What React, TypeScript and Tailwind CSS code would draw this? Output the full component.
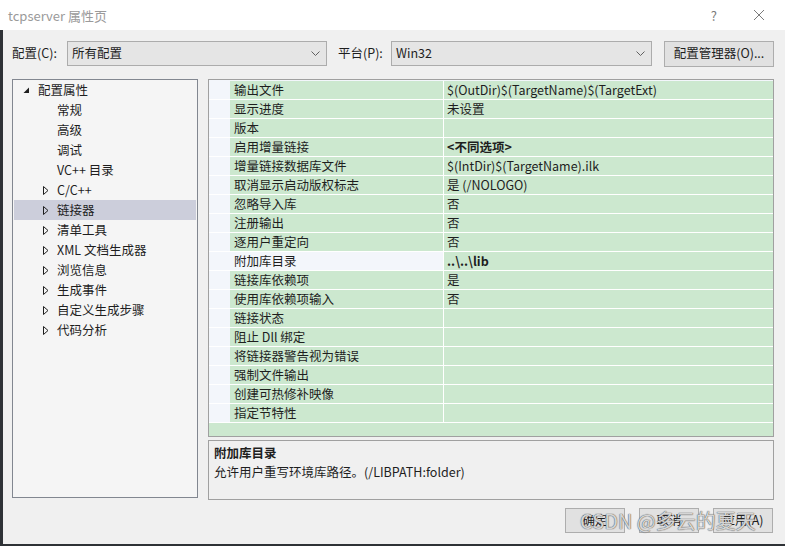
import React from 'react';

const FONT = '"Microsoft YaHei UI", "Noto Sans CJK SC", "Noto Sans", sans-serif';

const treeItems: { label: string; level: 0 | 1; expander?: 'open' | 'closed'; selected?: boolean }[] = [
  { label: '配置属性', level: 0, expander: 'open' },
  { label: '常规', level: 1 },
  { label: '高级', level: 1 },
  { label: '调试', level: 1 },
  { label: 'VC++ 目录', level: 1 },
  { label: 'C/C++', level: 1, expander: 'closed' },
  { label: '链接器', level: 1, expander: 'closed', selected: true },
  { label: '清单工具', level: 1, expander: 'closed' },
  { label: 'XML 文档生成器', level: 1, expander: 'closed' },
  { label: '浏览信息', level: 1, expander: 'closed' },
  { label: '生成事件', level: 1, expander: 'closed' },
  { label: '自定义生成步骤', level: 1, expander: 'closed' },
  { label: '代码分析', level: 1, expander: 'closed' },
];

const props: { name: string; value: string; bold?: boolean; selected?: boolean }[] = [
  { name: '输出文件', value: '$(OutDir)$(TargetName)$(TargetExt)' },
  { name: '显示进度', value: '未设置' },
  { name: '版本', value: '' },
  { name: '启用增量链接', value: '<不同选项>', bold: true },
  { name: '增量链接数据库文件', value: '$(IntDir)$(TargetName).ilk' },
  { name: '取消显示启动版权标志', value: '是 (/NOLOGO)' },
  { name: '忽略导入库', value: '否' },
  { name: '注册输出', value: '否' },
  { name: '逐用户重定向', value: '否' },
  { name: '附加库目录', value: '..\\..\\lib', bold: true, selected: true },
  { name: '链接库依赖项', value: '是' },
  { name: '使用库依赖项输入', value: '否' },
  { name: '链接状态', value: '' },
  { name: '阻止 Dll 绑定', value: '' },
  { name: '将链接器警告视为错误', value: '' },
  { name: '强制文件输出', value: '' },
  { name: '创建可热修补映像', value: '' },
  { name: '指定节特性', value: '' },
];

function Chevron() {
  return (
    <svg width="9" height="5" viewBox="0 0 9 5" className="text-[#606060]">
      <path d="M0.5 0.5 L4.5 4.5 L8.5 0.5" fill="none" stroke="currentColor" strokeWidth="1" />
    </svg>
  );
}

function Dropdown({ text, width }: { text: string; width: string }) {
  return (
    <div className={`${width} h-[25px] flex items-center justify-between border border-[#acacac] bg-[#e5e5e5] pl-[4px] pr-[6px]`}>
      <span>{text}</span>
      <Chevron />
    </div>
  );
}

function Expander({ kind }: { kind: 'open' | 'closed' }) {
  if (kind === 'open') {
    return (
      <svg width="7" height="7" viewBox="0 0 7 7">
        <path d="M6 0.5 L6 6 L0.5 6 Z" fill="#1e1e1e" />
      </svg>
    );
  }
  return (
    <svg width="6" height="9" viewBox="0 0 6 9">
      <path d="M0.5 0.5 L5 4.5 L0.5 8.5 Z" fill="none" stroke="#1e1e1e" strokeWidth="1" />
    </svg>
  );
}

function Button({ label }: { label: string }) {
  return (
    <div className="w-[60px] h-[25px] flex items-center justify-center border border-[#adadad] bg-[#e1e1e1]">
      {label}
    </div>
  );
}

export default function App() {
  return (
    <div
      className="relative w-[785px] h-[546px] overflow-hidden flex flex-col bg-[#f0f0f0] text-[12.5px] text-[#1e1e1e] leading-none"
      style={{ fontFamily: FONT }}
    >
      {/* title bar */}
      <div className="h-[30px] shrink-0 bg-white flex items-center pl-[8px] pr-[16px]">
        <span className="text-[13px] text-[#9a9a9a]">tcpserver 属性页</span>
        <span className="ml-auto mr-[36px] text-[13px] text-[#7a7a7a]">?</span>
        <svg width="12" height="12" viewBox="0 0 12 12" className="mr-[4px]">
          <path d="M1 1 L11 11 M11 1 L1 11" stroke="#7a7a7a" strokeWidth="1" />
        </svg>
      </div>

      <div className="flex flex-1 border-b-2 border-[#2e3236]">
        <div className="w-[3px] bg-[#2e3236]" />
        <div className="flex-1 flex flex-col pl-[9px]">
          {/* config row */}
          <div className="flex items-center h-[25px] mt-[11px]">
            <span className="w-[55px]">配置(C):</span>
            <Dropdown text="所有配置" width="w-[260px]" />
            <span className="ml-[11px] w-[53px]">平台(P):</span>
            <Dropdown text="Win32" width="w-[261px]" />
            <div className="ml-[12px] w-[110px] h-[26px] flex items-center justify-center border border-[#adadad] bg-[#e1e1e1]">
              配置管理器(O)...
            </div>
          </div>

          <div className="flex mt-[13px]">
            {/* tree */}
            <div className="w-[186px] h-[419px] border border-[#828790] bg-[#f5f5f5] pl-[1px] pr-[1px]">
              {treeItems.map((it) => (
                <div
                  key={it.label}
                  className={`h-[20px] flex items-center ${it.selected ? 'bg-[#cccedb]' : ''}`}
                >
                  <div className={`${it.level === 0 ? 'w-[24px] pl-[9px]' : 'w-[43px] pl-[29px]'} flex items-center`}>
                    {it.expander && <Expander kind={it.expander} />}
                  </div>
                  <span>{it.label}</span>
                </div>
              ))}
            </div>

            <div className="ml-[10px] flex flex-col">
              {/* property grid */}
              <div className="w-[566px] h-[358px] border border-[#a0a0a0] bg-[#f3f6fb] flex flex-col">
                <div className="h-[1px]" />
                {props.map((p) => (
                  <div key={p.name} className="h-[19px] flex border-b border-white">
                    <div className="w-[21px] bg-[#f3f6fb]" />
                    <div
                      className={`w-[214px] flex items-center pl-[4px] border-r border-white ${p.selected ? 'bg-[#f3f6fb]' : 'bg-[#cce8cf]'}`}
                    >
                      {p.name}
                    </div>
                    <div className={`flex-1 flex items-center pl-[3px] bg-[#cce8cf] ${p.bold ? 'font-bold' : ''}`}>
                      {p.value}
                    </div>
                  </div>
                ))}
                <div className="flex-1 bg-[#cce8cf]" />
              </div>

              {/* description */}
              <div className="mt-[3px] w-[566px] h-[60px] border border-[#a0a0a0] bg-[#f0f0f0] px-[5px] pt-[6px]">
                <div className="font-bold">附加库目录</div>
                <div className="mt-[6px]">允许用户重写环境库路径。(/LIBPATH:folder)</div>
              </div>

              {/* buttons */}
              <div className="flex justify-end gap-[14px] mt-[8px] mr-[1px]">
                <Button label="确定" />
                <Button label="取消" />
                <Button label="应用(A)" />
              </div>
            </div>
          </div>
        </div>
      </div>

      {/* watermark */}
      <div className="absolute left-[580px] top-[511px] text-[20px] text-[rgba(255,255,255,0.75)] [text-shadow:0_0_1px_#555,0_0_1px_#555] pointer-events-none">
        CSDN @多云的夏天
      </div>
    </div>
  );
}
